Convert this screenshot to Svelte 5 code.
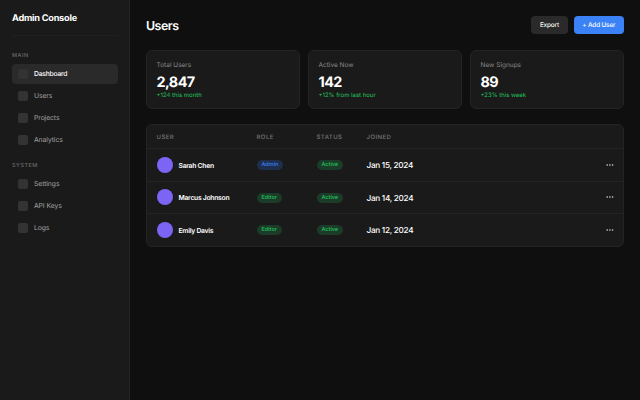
<script>
    const sections = [
        { title: 'Main', items: ['Dashboard', 'Users', 'Projects', 'Analytics'] },
        { title: 'System', items: ['Settings', 'API Keys', 'Logs'] }
    ];

    const stats = [
        { label: 'Total Users', value: '2,847', change: '+124 this month' },
        { label: 'Active Now', value: '142', change: '+12% from last hour' },
        { label: 'New Signups', value: '89', change: '+23% this week' }
    ];

    const users = [
        { name: 'Sarah Chen', role: 'Admin', status: 'Active', joined: 'Jan 15, 2024' },
        { name: 'Marcus Johnson', role: 'Editor', status: 'Active', joined: 'Jan 14, 2024' },
        { name: 'Emily Davis', role: 'Editor', status: 'Active', joined: 'Jan 12, 2024' }
    ];

    let active = $state('Dashboard');
</script>

<div class="layout">
    <aside class="sidebar">
        <div class="logo">Admin Console</div>
        {#each sections as section}
            <nav class="nav-section">
                <div class="nav-title">{section.title}</div>
                {#each section.items as item}
                    <button class="nav-item" class:active={active === item} onclick={() => (active = item)}>
                        <span class="nav-icon"></span>
                        <span>{item}</span>
                    </button>
                {/each}
            </nav>
        {/each}
    </aside>

    <main class="main">
        <header class="header">
            <h1>Users</h1>
            <div class="actions">
                <button class="btn">Export</button>
                <button class="btn primary">+ Add User</button>
            </div>
        </header>

        <section class="stats">
            {#each stats as stat}
                <div class="stat">
                    <div class="stat-label">{stat.label}</div>
                    <div class="stat-value">{stat.value}</div>
                    <div class="stat-change">{stat.change}</div>
                </div>
            {/each}
        </section>

        <section class="table">
            <div class="row head">
                <span>User</span>
                <span>Role</span>
                <span>Status</span>
                <span>Joined</span>
                <span></span>
            </div>
            {#each users as user}
                <div class="row">
                    <div class="user">
                        <span class="avatar"></span>
                        <span class="name">{user.name}</span>
                    </div>
                    <div><span class="badge" class:admin={user.role === 'Admin'}>{user.role}</span></div>
                    <div><span class="badge">{user.status}</span></div>
                    <div class="joined">{user.joined}</div>
                    <svg class="more" viewBox="0 0 8 2" aria-label="More">
                        <circle cx="1.2" cy="1" r="0.8" />
                        <circle cx="3.9" cy="1" r="0.8" />
                        <circle cx="6.6" cy="1" r="0.8" />
                    </svg>
                </div>
            {/each}
        </section>
    </main>
</div>

<style>
    :global(body) {
        background: #0f0f0f;
    }

    .layout {
        display: flex;
        height: 100vh;
        background: #0f0f0f;
        color: #fff;
        font-family: Inter, sans-serif;
        font-size: 8px;
        text-rendering: geometricPrecision;
        overflow: hidden;
    }

    button {
        border: none;
        font-family: inherit;
        text-rendering: inherit;
        cursor: pointer;
    }

    .sidebar {
        box-sizing: border-box;
        width: 130px;
        flex-shrink: 0;
        padding: 12px 11.5px 12px 12px;
        background: #1a1a1a;
        border-right: 1px solid #242424;
    }

    .logo {
        height: 23.5px;
        margin-bottom: 12px;
        border-bottom: 1px solid #202020;
        box-sizing: border-box;
        font-size: 9.2px;
        font-weight: 700;
        letter-spacing: -0.25px;
        line-height: 13px;
    }

    .nav-section {
        margin-bottom: 8px;
    }

    .nav-title {
        margin-bottom: 4px;
        padding-top: 4px;
        color: #6b6b6b;
        font-size: 5.5px;
        font-weight: 500;
        letter-spacing: 0.5px;
        line-height: 8px;
        text-transform: uppercase;
    }

    .nav-item {
        display: flex;
        align-items: center;
        gap: 6px;
        width: 100%;
        height: 20px;
        margin-bottom: 2px;
        padding: 0 6px;
        border-radius: 4px;
        background: none;
        color: #a0a0a0;
        font-size: 6.8px;
        letter-spacing: -0.08px;
        text-align: left;
    }

    .nav-item.active {
        background: #2a2a2a;
        color: #fff;
        font-weight: 500;
        letter-spacing: -0.25px;
    }

    .nav-icon {
        width: 10px;
        height: 10px;
        border-radius: 2px;
        background: #333;
    }

    .main {
        flex: 1;
        padding: 16px;
    }

    .header {
        display: flex;
        align-items: center;
        justify-content: space-between;
        height: 17.5px;
        margin-bottom: 16px;
    }

    h1 {
        margin: 0;
        padding-top: 1px;
        font-size: 12.4px;
        font-weight: 600;
        letter-spacing: -0.5px;
    }

    .actions {
        display: flex;
        gap: 6px;
    }

    .btn {
        height: 17.5px;
        padding: 1px 8.7px 0;
        border-radius: 4px;
        background: #2a2a2a;
        color: #fff;
        font-size: 6.4px;
        font-weight: 500;
        letter-spacing: -0.15px;
    }

    .btn.primary {
        background: #3b82f6;
    }

    .stats {
        display: grid;
        grid-template-columns: repeat(3, 1fr);
        gap: 8px;
        margin-bottom: 15.5px;
    }

    .stat {
        box-sizing: border-box;
        height: 59px;
        padding: 9.5px;
        border: 1px solid #242424;
        border-radius: 6px;
        background: #1a1a1a;
    }

    .stat-label {
        margin-bottom: 5.5px;
        padding-top: 0.5px;
        color: #888;
        font-size: 6.5px;
        line-height: 8px;
    }

    .stat-value {
        font-size: 14.4px;
        font-weight: 700;
        letter-spacing: -0.55px;
        line-height: 18px;
    }

    .stat-change {
        color: #22c55e;
        font-size: 6px;
        line-height: 7px;
    }

    .table {
        border: 1px solid #242424;
        border-radius: 6px;
        background: #1a1a1a;
    }

    .row {
        box-sizing: border-box;
        display: grid;
        grid-template-columns: 100px 60px 50px 1fr auto;
        align-items: center;
        height: 32.5px;
        padding: 0 9.5px;
        border-bottom: 1px solid #242424;
    }

    .row:last-child {
        height: 31.5px;
        border-bottom: none;
    }

    .row.head {
        height: 24px;
        padding-top: 1px;
        color: #777;
        font-size: 6px;
        font-weight: 500;
        letter-spacing: 0.45px;
        text-transform: uppercase;
    }

    .user {
        display: flex;
        align-items: center;
        gap: 6px;
    }

    .avatar {
        width: 16px;
        height: 16px;
        border-radius: 50%;
        background: #7c64f5;
    }

    .name {
        padding-top: 1px;
        font-size: 6.8px;
        font-weight: 600;
        letter-spacing: -0.28px;
    }

    .joined {
        padding-top: 0.5px;
        font-size: 8.2px;
        font-weight: 500;
        letter-spacing: -0.28px;
    }

    .badge {
        display: block;
        width: fit-content;
        margin-top: 1px;
        padding: 2px 5px 1px;
        border-radius: 6px;
        background: #1b3c28;
        color: #22c55e;
        font-size: 5.5px;
        font-weight: 500;
        line-height: 7px;
    }

    .badge.admin {
        background: #1d2f4d;
        color: #3b82f6;
    }

    .more {
        width: 8px;
        height: 2px;
        fill: #ddd;
    }
</style>
